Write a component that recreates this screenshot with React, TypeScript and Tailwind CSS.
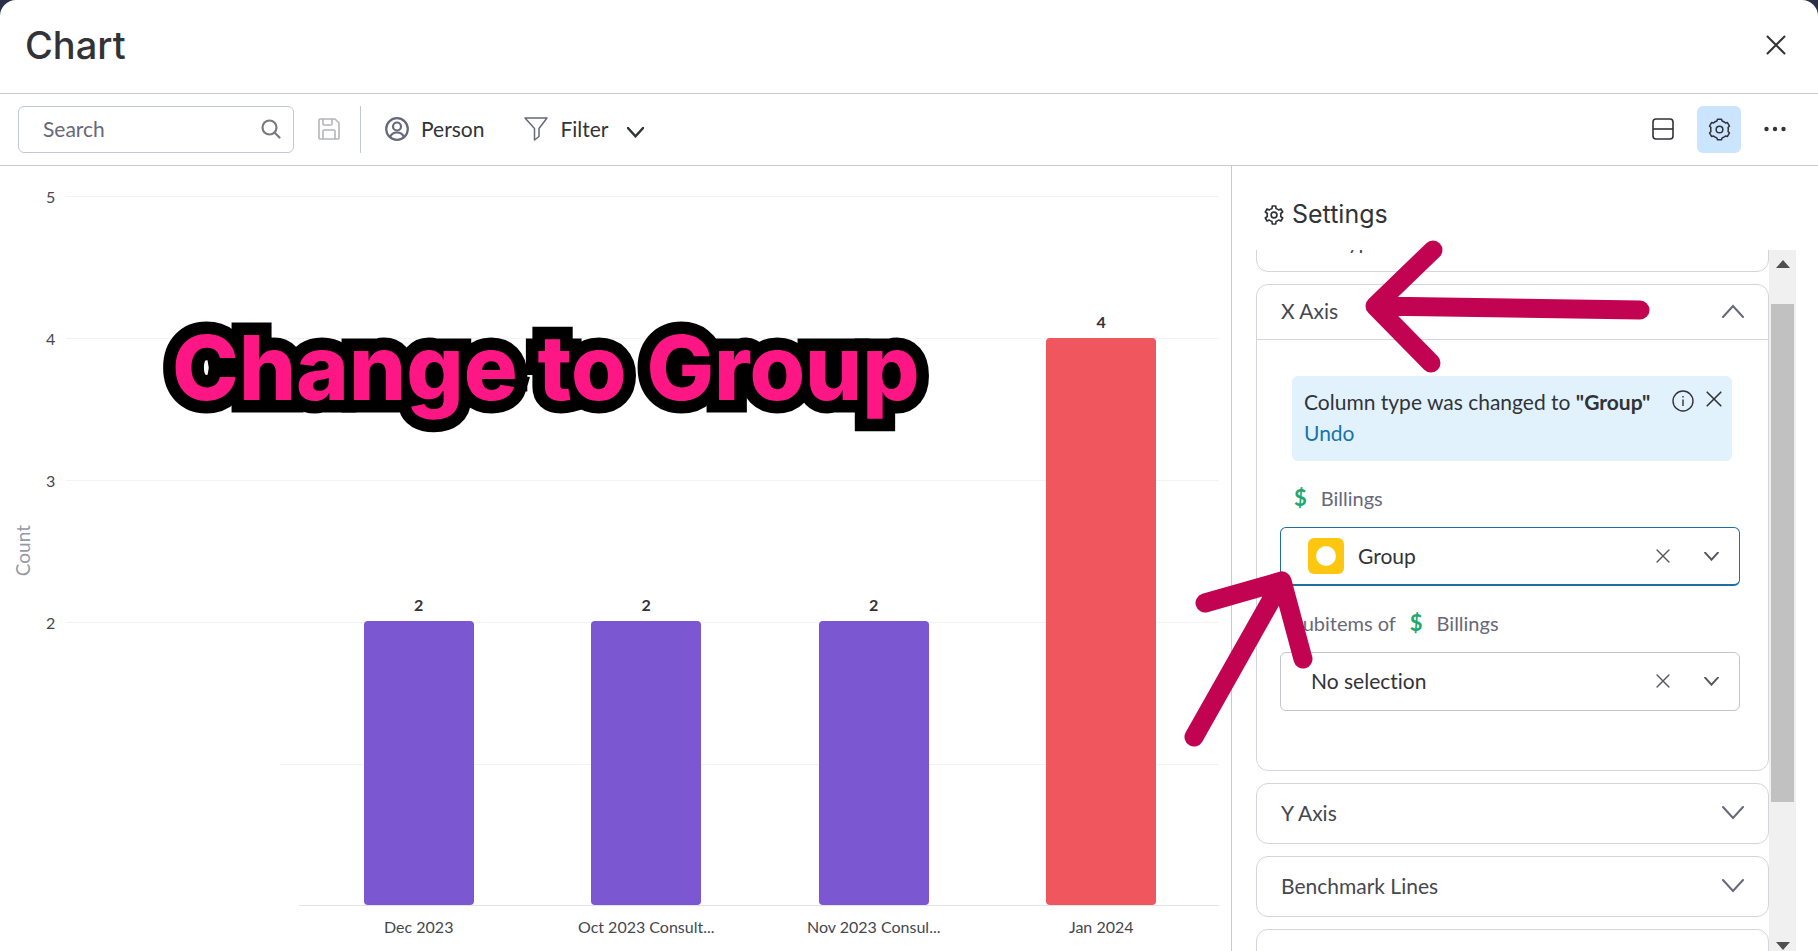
import { useState, type ReactNode } from 'react';

interface Bar {
  label: string;
  value: number;
  color: string;
}

const BARS: Bar[] = [
  { label: 'Dec 2023', value: 2, color: 'bg-[#7b57d1]' },
  { label: 'Oct 2023 Consult...', value: 2, color: 'bg-[#7b57d1]' },
  { label: 'Nov 2023 Consul...', value: 2, color: 'bg-[#7b57d1]' },
  { label: 'Jan 2024', value: 4, color: 'bg-[#f0565d]' },
];

const MAX = 5;
const TICKS = ['5', '4', '3', '2', ''];

// Six-toothed cog centred on 12,12
function gearPath(outer: number, inner: number) {
  const pt = (r: number, deg: number) => {
    const a = (deg * Math.PI) / 180;
    return `${(12 + r * Math.cos(a)).toFixed(2)} ${(12 + r * Math.sin(a)).toFixed(2)}`;
  };
  let d = '';
  for (let i = 0; i < 6; i++) {
    const a = i * 60 - 90;
    d += `${i ? `A${inner} ${inner} 0 0 1` : 'M'} ${pt(inner, a - 17)} L${pt(outer, a - 11)} L${pt(outer, a + 11)} L${pt(inner, a + 17)} `;
  }
  return `${d}A${inner} ${inner} 0 0 1 ${pt(inner, -107)}Z`;
}

function GearIcon({ className, deep }: { className?: string; deep?: boolean }) {
  return (
    <svg viewBox="0 0 24 24" fill="none" stroke="currentColor" strokeWidth={deep ? 2 : 1.6} strokeLinejoin="round" className={className}>
      <path d={deep ? gearPath(11, 8.2) : gearPath(11, 9.2)} />
      <circle cx="12" cy="12" r="3.5" />
    </svg>
  );
}

function CloseIcon({ className }: { className?: string }) {
  return (
    <svg viewBox="0 0 20 20" fill="none" stroke="currentColor" strokeWidth="2" strokeLinecap="round" className={className}>
      <path d="M1.5 1.5l17 17M18.5 1.5l-17 17" />
    </svg>
  );
}

function Chevron({ className, up }: { className?: string; up?: boolean }) {
  return (
    <svg viewBox="0 0 22 14" fill="none" stroke="currentColor" strokeLinecap="round" className={className}>
      <path d={up ? 'M1 13L11 2l10 11' : 'M1 1l10 11L21 1'} />
    </svg>
  );
}

function Dollar() {
  return <span className="text-[22px] leading-7 font-bold text-[#1fa971]">$</span>;
}

function Toolbar() {
  return (
    <div className="flex h-[72px] shrink-0 items-center border-b border-[#c9cbd0] pr-8 pb-px pl-[18px]">
      <label className="flex h-[47px] w-[276px] items-center rounded-md border border-[#c3c6d4] pr-3 pl-6">
        <input type="search" aria-label="Search" placeholder="Search" className="min-w-0 flex-1 text-[21px] outline-none placeholder:text-[#676879]" />
        <svg viewBox="0 0 20 20" fill="none" stroke="#7a7b82" strokeWidth="2.2" strokeLinecap="round" className="size-5">
          <circle cx="8.5" cy="8.5" r="7" />
          <path d="M13.5 13.5l5 5" />
        </svg>
      </label>
      <button aria-label="Save view" className="ml-6 text-[#b4b5bb]">
        <svg viewBox="0 0 22 22" fill="none" stroke="currentColor" strokeWidth="1.6" strokeLinejoin="round" className="size-[22px]">
          <path d="M2 1h15l4 4v15a1 1 0 0 1-1 1H2a1 1 0 0 1-1-1V2a1 1 0 0 1 1-1zM5 1v5a1 1 0 0 0 1 1h7a1 1 0 0 0 1-1V1M5 21v-8a1 1 0 0 1 1-1h10a1 1 0 0 1 1 1v8" />
        </svg>
      </button>
      <div className="ml-5 h-[47px] w-px bg-[#c3c6d4]" />
      <button className="ml-6 flex items-center gap-3 pb-px text-[21px]">
        <svg viewBox="0 0 24 24" fill="none" stroke="#676879" strokeWidth="2.2" className="size-6">
          <circle cx="12" cy="12" r="10.8" />
          <circle cx="12" cy="9.5" r="4" />
          <path d="M5 20c1.5-3.5 4-4.5 7-4.5s5.5 1 7 4.5" />
        </svg>
        Person
      </button>
      <button className="ml-10 flex items-center gap-3 pb-px text-[21px]">
        <svg viewBox="0 0 24 24" fill="none" stroke="#676879" strokeWidth="1.5" strokeLinejoin="round" className="size-6">
          <path d="M1 1h22l-8 10.5v8L10.5 23V11.5z" />
        </svg>
        Filter
      </button>
      <button aria-label="Filter options" className="mt-[6px] ml-[18px]">
        <Chevron className="h-[11px] w-[17px] stroke-3" />
      </button>
      <div className="ml-auto flex items-center">
        <button aria-label="Split view">
          <svg viewBox="0 0 22 22" fill="none" stroke="currentColor" strokeWidth="1.6" className="size-[22px]">
            <rect x="1" y="1" width="20" height="20" rx="3" />
            <path d="M1 11h20" />
          </svg>
        </button>
        <button aria-label="Settings" className="ml-[23px] grid h-[47px] w-11 place-items-center rounded-md bg-[#cce5ff]">
          <GearIcon className="size-[23px]" />
        </button>
        <button aria-label="More" className="ml-[23px]">
          <svg viewBox="0 0 22 6" fill="currentColor" className="h-[6px] w-[22px]">
            <circle cx="2.5" cy="3" r="2.2" />
            <circle cx="11" cy="3" r="2.2" />
            <circle cx="19.5" cy="3" r="2.2" />
          </svg>
        </button>
      </div>
    </div>
  );
}

function Chart() {
  return (
    <main className="relative flex min-w-0 flex-1 pt-[30px] pr-3">
      <div className="grid w-[46px] shrink-0 place-items-center pb-[46px]">
        <span className="rotate-180 text-[19px] leading-6 text-[#9699a6] [writing-mode:vertical-rl]">Count</span>
      </div>
      <div className="flex min-w-0 flex-1 flex-col">
        <div className="grid min-h-0 flex-1">
          <div className="col-start-1 row-start-1 grid grid-rows-5">
            {TICKS.map((t, i) => (
              <div key={i} className="flex gap-3">
                <span className="-mt-[9px] w-2 text-base leading-5 text-[#45474f]">{t}</span>
                <div className={t ? 'flex-1 border-t border-[#f3f3f5]' : 'ml-[214px] flex-1 border-t border-[#f3f3f5]'} />
              </div>
            ))}
          </div>
          <div className="col-start-1 row-start-1 ml-[253px] grid grid-cols-4 border-b border-[#e2e3e8] pr-1 pl-[6px]">
            {BARS.map((b) => (
              <div key={b.label} className="flex flex-col items-center justify-end">
                <span className="mb-[6px] text-base leading-5 font-bold">{b.value}</span>
                <div className={`w-[110px] rounded-[4px] ${b.color}`} style={{ height: `${(b.value / MAX) * 100}%` }} />
              </div>
            ))}
          </div>
        </div>
        <div className="ml-[253px] grid h-[45px] grid-cols-4 pt-[11px] pr-1 pl-[6px] text-center text-base leading-5 whitespace-nowrap text-[#45474f]">
          {BARS.map((b) => <span key={b.label}>{b.label}</span>)}
        </div>
      </div>
      <p className="absolute top-[146px] left-[172px] font-['Inter',sans-serif] text-[90px] leading-[112px] font-extrabold whitespace-nowrap text-[#ff1685] [-webkit-text-stroke:25px_black] [paint-order:stroke_fill]">
        Change to Group
      </p>
    </main>
  );
}

function Section({ title, children }: { title: string; children?: ReactNode }) {
  return (
    <section className="shrink-0 rounded-xl border border-[#d4d5da] bg-white">
      <button className={`flex w-full items-center justify-between px-6 pb-[2px] text-[21px] text-[#45474f] ${children ? 'h-[55px] border-b border-[#d4d5da]' : 'h-[59px]'}`}>
        {title}
        <Chevron up={!!children} className="h-[14px] w-[22px] stroke-2 text-[#676879]" />
      </button>
      {children}
    </section>
  );
}

function ColumnSelect({ value, active, onClear, label }: { value: string; active?: boolean; onClear: () => void; label: string }) {
  return (
    <div className={`flex h-[59px] items-center rounded-md border pr-5 ${active ? 'border-b-2 border-[#1f6f9e] pl-[27px]' : 'border-[#c4c5ca] pb-px pl-[30px]'}`}>
      {active && (
        <span className="mr-[14px] grid size-9 place-items-center rounded-md bg-[#fdc60f]">
          <span className="size-5 rounded-full bg-white" />
        </span>
      )}
      <button aria-label={label} className="flex-1 text-left text-[21px]">{value}</button>
      <button aria-label="Clear" onClick={onClear} className="text-[#55565f]">
        <CloseIcon className="size-[14px]" />
      </button>
      <button aria-label="Open list" className="ml-[34px] text-[#55565f]">
        <Chevron className="h-[9px] w-[15px] stroke-3" />
      </button>
    </div>
  );
}

function SettingsPanel() {
  const [column, setColumn] = useState('Group');
  const [sub, setSub] = useState('No selection');

  return (
    <aside className="relative flex w-[587px] shrink-0 flex-col border-l border-[#c9cbd0] pr-[22px] pl-6">
      <h2 className="flex h-[84px] shrink-0 items-center gap-2 pt-[13px] pl-2 font-['Inter',sans-serif] text-[25px]">
        <GearIcon deep className="size-5" />
        Settings
      </h2>
      <div className="flex min-h-0 flex-1 overflow-hidden">
        <div className="-mt-[39px] flex flex-1 flex-col gap-3">
          <Section title="Chart Type" />
          <Section title="X Axis">
            <div className="flex flex-col pt-9 pr-7 pb-[59px] pl-[23px]">
              <div className="mr-2 ml-3 flex h-[85px] rounded-md bg-[#e1f2fd] pt-[10px] pr-[10px] pl-3 text-[21px] leading-[31px] whitespace-nowrap">
                <p className="flex-1">
                  Column type was changed to <b>"Group"</b>
                  <br />
                  <a href="#undo" className="text-[#1873ab]">Undo</a>
                </p>
                <svg viewBox="0 0 22 22" fill="none" stroke="currentColor" strokeWidth="1.4" className="mt-1 size-[22px]">
                  <circle cx="11" cy="11" r="10" />
                  <path d="M11 9.5v6.5M11 6v1.6" />
                </svg>
                <button aria-label="Dismiss" className="mt-[5px] ml-3 h-4">
                  <CloseIcon className="size-4" />
                </button>
              </div>
              <div className="mt-[23px] mb-[15px] flex items-center gap-[14px] pl-[14px] text-xl leading-7 text-[#676879]">
                <Dollar />
                Billings
              </div>
              <ColumnSelect active label="Billings column" value={column} onClear={() => setColumn('No selection')} />
              <div className="mt-[23px] mb-[15px] flex items-center gap-[14px] pl-3 text-xl leading-7 text-[#676879]">
                Subitems of
                <Dollar />
                Billings
              </div>
              <ColumnSelect label="Subitems column" value={sub} onClear={() => setSub('No selection')} />
            </div>
          </Section>
          <Section title="Y Axis" />
          <Section title="Benchmark Lines" />
          <Section title="More settings" />
        </div>
        <div className="flex w-[27px] flex-col items-center bg-[#f0f0f0] pt-[10px]">
          <svg viewBox="0 0 14 8" className="h-2 w-[14px] shrink-0" fill="#505050"><path d="M0 8l7-8 7 8z" /></svg>
          <div className="mt-9 mb-[140px] w-[23px] flex-1 bg-[#c1c1c1]" />
          <svg viewBox="0 0 14 8" className="mb-px h-2 w-[14px] shrink-0" fill="#505050"><path d="M0 0l7 8 7-8z" /></svg>
        </div>
      </div>
      {/* callout arrows */}
      <svg viewBox="0 0 480 520" fill="none" stroke="#c10351" strokeWidth="19" strokeLinecap="round" strokeLinejoin="round" className="pointer-events-none absolute top-[64px] -left-[53px] h-[520px] w-[480px]">
        <path d="M254 20L196 76l56 57M196 76l265 4" />
        <path d="M26 373l77-22 21 78M103 351L15 507" />
      </svg>
    </aside>
  );
}

export default function App() {
  return (
    <div className="h-screen bg-[#2a3147]">
      <div className="flex h-full flex-col overflow-hidden rounded-t-2xl bg-white font-['Lato',sans-serif] text-[#323338] [font-variant-ligatures:none]">
        <header className="flex h-[94px] shrink-0 items-center justify-between border-b border-[#c9cbd0] pr-8 pb-[3px] pl-[25px]">
          <h1 className="font-['Inter',sans-serif] text-[38px] leading-none font-medium">Chart</h1>
          <button aria-label="Close"><CloseIcon className="size-5" /></button>
        </header>
        <Toolbar />
        <div className="flex min-h-0 flex-1">
          <Chart />
          <SettingsPanel />
        </div>
      </div>
    </div>
  );
}
